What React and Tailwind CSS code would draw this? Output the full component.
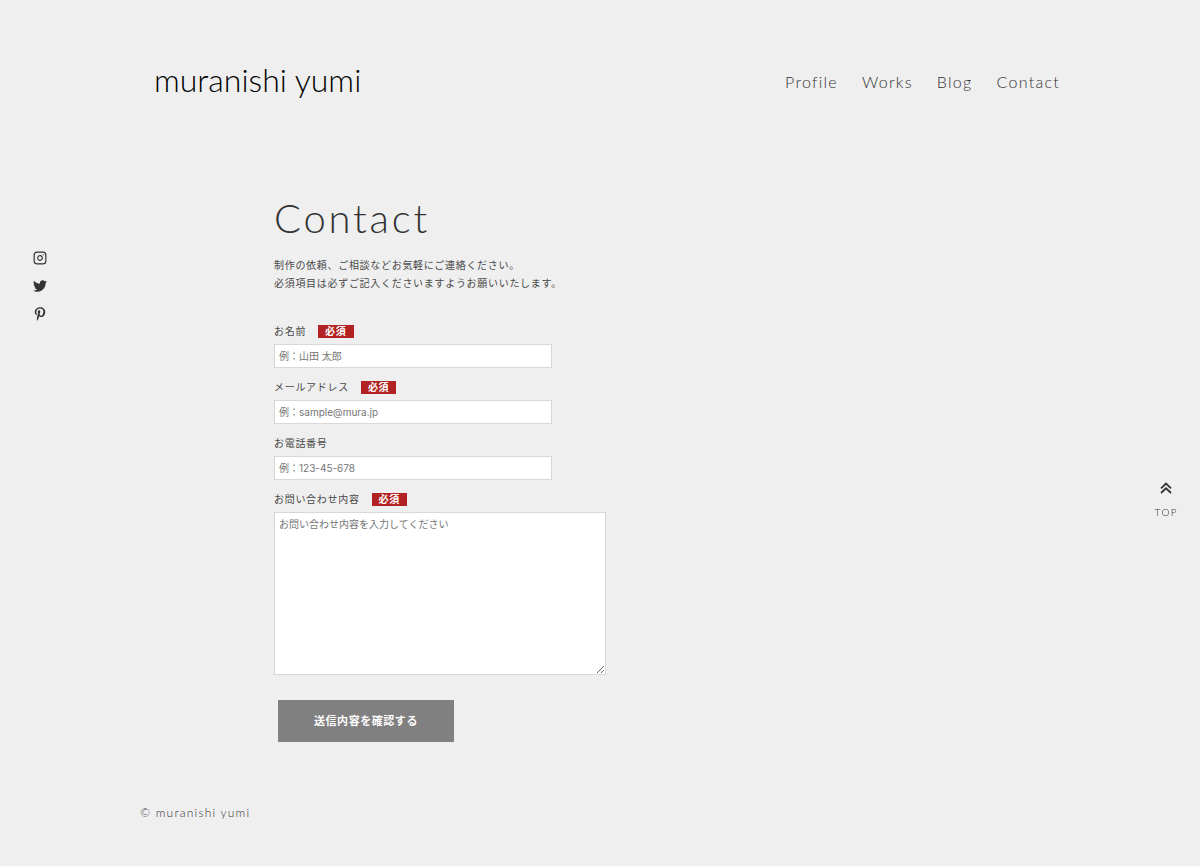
import React from "react";
import { FaTwitter, FaPinterestP } from "react-icons/fa";
import { FiInstagram } from "react-icons/fi";

const navItems = ["Profile", "Works", "Blog", "Contact"];

const fields = [
  { id: "name", label: "お名前", type: "text", placeholder: "例：山田 太郎", required: true },
  { id: "email", label: "メールアドレス", type: "email", placeholder: "例：sample@mura.jp", required: true },
  { id: "tel", label: "お電話番号", type: "tel", placeholder: "例：123-45-678", required: false },
];

const FieldLabel = ({ id, label, required }) => (
  <div className="flex h-4 items-center gap-3">
    <label htmlFor={id}>{label}</label>
    {required && (
      <span className="flex h-[13px] items-center bg-[#b22222] px-[7px] font-bold text-white">
        必須
      </span>
    )}
  </div>
);

const ChevronsUp = () => (
  <svg width="12" height="12" viewBox="0 0 12 12" fill="none" stroke="currentColor" strokeWidth="1.8">
    <path d="M1 6.3 6 1.6l5 4.7" />
    <path d="M1 11 6 6.3l5 4.7" />
  </svg>
);

const App = () => {
  return (
    <div className="min-h-screen bg-[#efefef] font-['Lato','Noto_Sans_CJK_JP',sans-serif] text-[#333]">
      <header className="mx-auto flex max-w-[920px] items-start justify-between pt-[62px] pl-[14px]">
        <a
          href="#"
          className="font-['Lato',sans-serif] text-[32px] leading-9 font-light text-black"
        >
          muranishi yumi
        </a>
        <nav className="flex gap-6 pt-2 text-[16px] leading-6 font-light tracking-[0.08em]">
          {navItems.map((item) => (
            <a key={item} href="#">
              {item}
            </a>
          ))}
        </nav>
      </header>

      <ul className="fixed top-[251px] left-[33px] flex flex-col gap-[14px] text-[14px]">
        <li>
          <a href="#" aria-label="Instagram">
            <FiInstagram />
          </a>
        </li>
        <li>
          <a href="#" aria-label="Twitter">
            <FaTwitter />
          </a>
        </li>
        <li>
          <a href="#" aria-label="Pinterest">
            <FaPinterestP />
          </a>
        </li>
      </ul>

      <main className="mx-auto max-w-[652px] pt-[95px] text-[10px] tracking-[0.07em]">
        <h1 className="text-[40px] leading-[50px] font-light tracking-[0.07em]">Contact</h1>
        <p className="mt-[13px] leading-[18px] text-[#484848]">
          制作の依頼、ご相談などお気軽にご連絡ください。
          <br />
          必須項目は必ずご記入くださいますようお願いいたします。
        </p>

        <form className="mt-[31px] text-[#484848]">
          {fields.map((field) => (
            <div key={field.id} className="mb-[11px]">
              <FieldLabel {...field} />
              <input
                id={field.id}
                type={field.type}
                placeholder={field.placeholder}
                className="mt-[5px] block h-6 w-[278px] max-w-full border border-[#d8d8d8] bg-white px-1 font-['Inter','Noto_Sans_CJK_JP',sans-serif] tracking-normal placeholder:text-[#757575]"
              />
            </div>
          ))}
          <FieldLabel id="message" label="お問い合わせ内容" required />
          <textarea
            id="message"
            placeholder="お問い合わせ内容を入力してください"
            className="mt-[5px] block h-[163px] w-[332px] max-w-full border border-[#d8d8d8] bg-white px-1 py-1 leading-[14px] tracking-normal placeholder:text-[#757575]"
          />
          <button
            type="submit"
            className="mt-[25px] ml-1 block h-[42px] w-[176px] bg-[#808080] text-[11px] font-bold tracking-wider text-white"
          >
            送信内容を確認する
          </button>
        </form>
      </main>

      <a
        href="#"
        className="fixed top-[482px] right-[22px] flex flex-col items-center gap-[10px] text-[10px] leading-4 font-light tracking-[0.14em]"
      >
        <ChevronsUp />
        TOP
      </a>

      <footer className="mx-auto max-w-[920px] pt-[63px] pb-10">
        <small className="block text-[12px] leading-4 font-light tracking-widest">
          © muranishi yumi
        </small>
      </footer>
    </div>
  );
};

export default App;
